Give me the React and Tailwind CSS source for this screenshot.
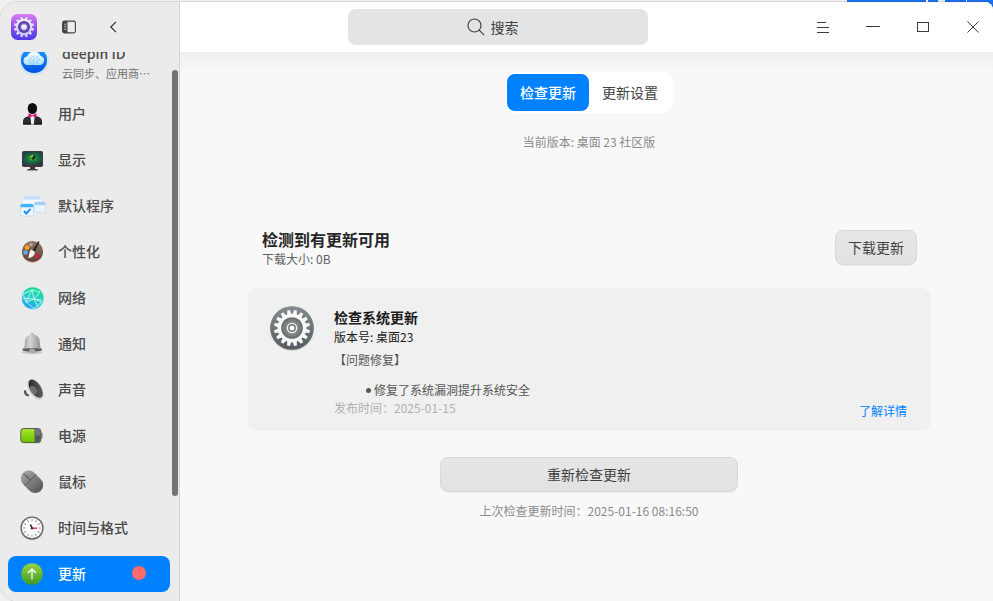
import React from "react";

function teeth(count, cx, cy, w, top, bottom, offset = 0) {
  return Array.from({ length: count }, (_, i) => (
    <path
      key={i}
      d={`M${cx - w / 2} ${cy - bottom}L${cx - w / 3} ${cy - top}H${cx + w / 3}L${cx + w / 2} ${cy - bottom}Z`}
      transform={`rotate(${(360 / count) * i + offset} ${cx} ${cy})`}
    />
  ));
}

function AppLogo() {
  return (
    <svg className="size-[26px] shrink-0" viewBox="0 0 26 26" aria-hidden="true">
      <defs>
        <linearGradient id="logoBg" x1="0" y1="0" x2="0" y2="1">
          <stop offset="0" stopColor="#e07bf5" />
          <stop offset=".5" stopColor="#8a50e6" />
          <stop offset="1" stopColor="#4f3bea" />
        </linearGradient>
        <linearGradient id="logoGear" x1="0" y1="0" x2="0" y2="1">
          <stop offset="0" stopColor="#f6f0fd" />
          <stop offset="1" stopColor="#c3c8f6" />
        </linearGradient>
      </defs>
      <rect width="26" height="26" rx="6.5" fill="url(#logoBg)" />
      <g fill="#dcd8f8">{teeth(12, 13, 13, 3.2, 10.2, 7.2, 15)}</g>
      <circle cx="13" cy="13" r="8" fill="url(#logoGear)" />
      <circle cx="13" cy="13" r="6" fill="#5a3a9e" />
      <circle cx="13" cy="13" r="4.400" fill="#7c62c8" />
      <circle cx="13" cy="13" r="2.800" fill="#eef0ff" />
    </svg>
  );
}

function CloudIcon() {
  return (
    <svg className="h-9 w-[30px] shrink-0" viewBox="0 0 30 36" aria-hidden="true">
      <defs>
        <linearGradient id="cloudBg" x1="0" y1="0" x2="0" y2="1">
          <stop offset="0" stopColor="#1aa0ff" />
          <stop offset="1" stopColor="#0050e0" />
        </linearGradient>
        <linearGradient id="cloudFg" x1="0" y1="0" x2="0" y2="1">
          <stop offset="0" stopColor="#ffffff" />
          <stop offset="1" stopColor="#a9dcff" />
        </linearGradient>
      </defs>
      <circle cx="14" cy="15.5" r="15" fill="#cfe3f2" />
      <circle cx="14" cy="15" r="13" fill="url(#cloudBg)" />
      <path d="M7.500 20a4.300 4.300 0 0 1-.6-8.500 7.400 7.400 0 0 1 13.600-.8A4.800 4.800 0 0 1 20.500 20Z" fill="url(#cloudFg)" />
      <path d="M11 19c-3-3 0-8 4-8M14 19.500c-2-3 0-7 4-7.500M17 19c-1-2 0-4 3-4.500" fill="none" stroke="#7cc4fb" strokeWidth=".8" />
    </svg>
  );
}

function UserIcon() {
  return (
    <>
      <path d="M3 23.500v-3.200c0-3 2-4.300 5.200-5.100L12.500 14l4.300 1.200c3.200.8 5.200 2.100 5.200 5.100v3.200Z" fill="#2c2c2e" />
      <path d="M3 23.500v-1.500h19v1.500Z" fill="#141414" />
      <path d="M10.300 14.500h4.400l-.9 9h-2.600Z" fill="#f0f0f0" />
      <ellipse cx="12.400" cy="7.500" rx="4.700" ry="5.600" fill="#0d0d0d" />
      <path d="M8.500 12.300 12.500 14.200l4-1.900v4.400l-4-1.700-4 1.700Z" fill="#e0146e" />
    </>
  );
}

function DisplayIcon() {
  return (
    <>
      <defs>
        <radialGradient id="screen" cx=".5" cy=".5" r=".65">
          <stop offset="0" stopColor="#56b52c" />
          <stop offset=".45" stopColor="#1d7440" />
          <stop offset="1" stopColor="#12404a" />
        </radialGradient>
      </defs>
      <ellipse cx="12.500" cy="23.600" rx="7" ry="1" fill="#cfcfcf" />
      <path d="M10 19h5v3h2.500v1.200h-10V22H10Z" fill="#3a3a3a" />
      <rect x="2" y="4" width="21" height="16" rx="1.800" fill="#3b3b3b" />
      <rect x="3.500" y="5.500" width="18" height="11.500" fill="url(#screen)" />
      <path d="m15 8-3.500 2.500 2 3.500.5-3 1.500 1Z" fill="#0b2a18" />
      <path d="m13 8-3 1.500 2.500 1Z" fill="#b9e04a" />
    </>
  );
}

function DefaultAppsIcon() {
  return (
    <>
      <rect x="3" y="3" width="18" height="15" rx="2" fill="#f4f9ff" />
      <path d="M3 6.500V5a2 2 0 0 1 2-2h14a2 2 0 0 1 2 2v1.500Z" fill="#c3e0fc" />
      <rect x="14.500" y="9" width="11" height="10.500" rx="1.800" fill="#e9f3fe" stroke="#b9d4ee" strokeWidth=".5" />
      <path d="M14.500 12v-1.200A1.800 1.800 0 0 1 16.300 9h7.400a1.800 1.800 0 0 1 1.800 1.800V12Z" fill="#9dd0fc" />
      <rect x=".5" y="11" width="13" height="12" rx="1.800" fill="#f0f7ff" stroke="#a9cdec" strokeWidth=".5" />
      <path d="M.5 14.300v-1.500A1.800 1.800 0 0 1 2.300 11h9.400a1.800 1.800 0 0 1 1.800 1.800v1.500Z" fill="#3fb0fb" />
      <path d="m4 18 2.300 2.500 4.300-4.700" fill="none" stroke="#1e90f5" strokeWidth="1.900" />
    </>
  );
}

function PaletteIcon() {
  return (
    <>
      <defs>
        <linearGradient id="palette" x1="0" y1="0" x2="0" y2="1">
          <stop offset="0" stopColor="#8d7769" />
          <stop offset="1" stopColor="#5f4338" />
        </linearGradient>
      </defs>
      <circle cx="12.500" cy="13.300" r="10.700" fill="#e8b9ae" />
      <circle cx="12.500" cy="12.500" r="10.500" fill="url(#palette)" />
      <circle cx="7" cy="8.500" r="2.300" fill="#f5a623" />
      <circle cx="11" cy="5.800" r="1.700" fill="#c9a48c" />
      <circle cx="5.500" cy="13.500" r="2.200" fill="#58aef0" />
      <circle cx="17" cy="17" r="2" fill="#e3174f" />
      <path d="M18.500 2 12.500 11.500l2 1.500L19.500 3Z" fill="#2a2523" />
      <path d="M11.500 10.500 15 13c-.4 4-3.500 6-7 6 1.600-2 .6-6.500 3.500-8.500Z" fill="#f6f1ec" />
    </>
  );
}

function NetworkIcon() {
  return (
    <>
      <defs>
        <linearGradient id="globe" x1=".7" y1="0" x2=".3" y2="1">
          <stop offset="0" stopColor="#1edc8c" />
          <stop offset=".5" stopColor="#24cfc8" />
          <stop offset="1" stopColor="#1f9df0" />
        </linearGradient>
      </defs>
      <circle cx="12.700" cy="13.600" r="11.300" fill="#b9e6f2" />
      <circle cx="12.700" cy="13" r="10.800" fill="url(#globe)" />
      <path
        d="m3 9 9-4 8 2M3 9l3 8 8-3 6-7M6 17l6-12 2 9 4 8M2.500 13l20 2M6 17l8 6.500L22 17l-8-3"
        fill="none"
        stroke="#d4fff3"
        strokeWidth=".8"
      />
    </>
  );
}

function BellIcon() {
  return (
    <>
      <defs>
        <linearGradient id="bell" x1="0" y1="0" x2="1" y2="0">
          <stop offset="0" stopColor="#9a9a9a" />
          <stop offset=".4" stopColor="#d6d6d6" />
          <stop offset="1" stopColor="#858585" />
        </linearGradient>
      </defs>
      <ellipse cx="12" cy="21.300" rx="10.300" ry="1.800" fill="#c2c2c2" />
      <circle cx="12.300" cy="3.400" r="1.600" fill="#b5b5b5" />
      <path d="M12.300 3.500c5 0 7.400 3.200 7.500 7.500.1 4 .4 5.500 2.400 7.500-2 2-18 2-20 0 2-2 2.500-3.500 2.600-7.500.1-4.300 2.500-7.500 7.500-7.500Z" fill="url(#bell)" />
      <path d="M2 18.500c3-1.700 17.400-1.700 20.400 0-1 2.800-19.400 2.800-20.400 0Z" fill="#585858" />
      <ellipse cx="12.200" cy="20" rx="3.200" ry="2.200" fill="#a9a9a9" />
    </>
  );
}

function SpeakerIcon() {
  return (
    <>
      <defs>
        <linearGradient id="cone" x1="0" y1="0" x2="1" y2="1">
          <stop offset="0" stopColor="#1f1f1f" />
          <stop offset="1" stopColor="#6a6a6a" />
        </linearGradient>
      </defs>
      <path d="M9 3 4 13c-.8 3.500 1.500 6.500 5 6.500l10 3Z" fill="#f0f0f0" />
      <path d="M4.300 13c-1.300 3 .9 6.300 4.200 6.500l1-1.700c-2-.5-3.300-2.300-3.200-4.300Z" fill="#5a5a5a" />
      <ellipse cx="15.300" cy="12.300" rx="6.500" ry="11.600" fill="#d0d0d0" transform="rotate(-33 15.300 12.300)" />
      <ellipse cx="15.700" cy="11.700" rx="5.300" ry="10.300" fill="url(#cone)" transform="rotate(-33 15.700 11.700)" />
      <ellipse cx="13.500" cy="13" rx="3" ry="4.600" fill="#6f6f6f" transform="rotate(-33 13.500 13)" />
    </>
  );
}

function BatteryIcon() {
  return (
    <>
      <defs>
        <linearGradient id="charge" x1="0" y1="0" x2="0" y2="1">
          <stop offset="0" stopColor="#a4e62a" />
          <stop offset="1" stopColor="#6cc600" />
        </linearGradient>
      </defs>
      <rect x="0" y="6" width="22" height="15" rx="4" fill="#d5e8ae" />
      <rect x="20" y="9.500" width="2.700" height="6" rx="1.200" fill="#8b8b8b" />
      <rect x=".3" y="5" width="21" height="15" rx="4" fill="#5a5a5a" />
      <path d="M4 6h10.500v13H4a2.700 2.700 0 0 1-2.700-2.700V8.700A2.700 2.700 0 0 1 4 6Z" fill="url(#charge)" />
      <path d="M14.500 6H17.500a3 3 0 0 1 3 3v3.500h-6Z" fill="#747474" />
    </>
  );
}

function MouseIcon() {
  return (
    <>
      <defs>
        <linearGradient id="mouse" x1="0" y1="0" x2="0" y2="1">
          <stop offset="0" stopColor="#a2a2a2" />
          <stop offset="1" stopColor="#585858" />
        </linearGradient>
      </defs>
      <g transform="rotate(-45 12 12.800)">
        <rect x="4" y=".3" width="16" height="25" rx="8" fill="url(#mouse)" />
        <path d="M4 10.500h16M12 .3v10.200" stroke="#505050" strokeWidth=".9" />
        <rect x="11" y="4" width="2" height="4.500" rx="1" fill="#6a6a6a" />
      </g>
    </>
  );
}

function ClockIcon() {
  return (
    <>
      <circle cx="12" cy="13.600" r="12" fill="#cfcfcf" />
      <circle cx="12" cy="13" r="11.500" fill="#636363" />
      <circle cx="12" cy="13" r="10.200" fill="#fbfbfb" />
      <g fill="#777777">
        {Array.from({ length: 12 }, (_, i) => (
          <rect key={i} x="11.600" y="4.200" width=".9" height="1.900" transform={`rotate(${i * 30} 12 13)`} />
        ))}
      </g>
      <path d="M10.500 9.500 12 13.200" stroke="#222222" strokeWidth="1.500" />
      <path d="M12 13.300h5" stroke="#ee3b3b" strokeWidth="1.400" />
      <circle cx="12" cy="13.200" r="1.200" fill="#333333" />
    </>
  );
}

function UpdateIcon() {
  return (
    <>
      <defs>
        <linearGradient id="update" x1="0" y1="0" x2="0" y2="1">
          <stop offset="0" stopColor="#98d645" />
          <stop offset="1" stopColor="#3f9a22" />
        </linearGradient>
      </defs>
      <circle cx="12" cy="13" r="10.800" fill="url(#update)" />
      <path d="M12 18.200V8.500M8 12l4-4 4 4" fill="none" stroke="#ffffff" strokeWidth="1.300" />
    </>
  );
}

const items = [
  { name: "用户", Icon: UserIcon },
  { name: "显示", Icon: DisplayIcon },
  { name: "默认程序", Icon: DefaultAppsIcon },
  { name: "个性化", Icon: PaletteIcon },
  { name: "网络", Icon: NetworkIcon },
  { name: "通知", Icon: BellIcon },
  { name: "声音", Icon: SpeakerIcon },
  { name: "电源", Icon: BatteryIcon },
  { name: "鼠标", Icon: MouseIcon },
  { name: "时间与格式", Icon: ClockIcon },
  { name: "更新", Icon: UpdateIcon, active: true, badge: true },
];

function Sidebar() {
  return (
    <aside className="flex w-[180px] shrink-0 flex-col border-r border-[#d4d4d4] bg-[#ebebeb]">
      <header className="flex h-[50px] shrink-0 items-center pl-[11px]">
        <AppLogo />
        <button type="button" aria-label="切换侧边栏" className="ml-5 flex size-6 items-center justify-center">
          <svg className="size-[14px]" viewBox="0 0 14 14" fill="none">
            <rect x=".6" y="1.100" width="12.800" height="11.800" rx="1.800" stroke="#444444" strokeWidth="1.100" />
            <path d="M1 2.500A1.500 1.500 0 0 1 2.500 1H5.500v12h-3A1.500 1.500 0 0 1 1 11.500Z" fill="#444444" />
            <path d="M2.300 4.200h2M2.300 6.700h2M2.300 9.200h2" stroke="#ebebeb" strokeWidth=".9" />
          </svg>
        </button>
        <button type="button" aria-label="返回" className="ml-5 flex size-6 items-center justify-center">
          <svg className="size-3" viewBox="0 0 12 12" fill="none">
            <path d="M9 .8 3.800 6 9 11.200" stroke="#333333" strokeWidth="1.200" />
          </svg>
        </button>
      </header>
      <div className="flex min-h-0 flex-1">
        <nav className="flex min-w-0 flex-1 flex-col justify-end gap-[10px] overflow-hidden pb-[9px] pl-2">
          <a href="#deepin-id" className="flex h-[46px] shrink-0 items-center gap-3 pl-3 text-[#4d4d4d]">
            <CloudIcon />
            <span className="min-w-0 pb-[2px] whitespace-nowrap">
              <span className="block text-sm leading-5 font-medium">deepin ID</span>
              <span className="block pt-px text-[11px] leading-[18px] text-[#707070]">云同步、应用商…</span>
            </span>
          </a>
          {items.map(({ name, Icon, active, badge }) => (
            <a
              key={name}
              href="#"
              className={
                active
                  ? "flex h-9 shrink-0 items-center gap-3 rounded-lg bg-[#0081ff] pl-3 text-sm font-medium text-white"
                  : "flex h-9 shrink-0 items-center gap-3 rounded-lg pl-3 text-sm font-medium text-[#4a4a4a]"
              }
            >
              <svg className="size-[26px] shrink-0" viewBox="0 0 26 26" aria-hidden="true">
                <Icon />
              </svg>
              <span className="flex-1 pb-[2px]">{name}</span>
              {badge && <span className="mr-6 mb-[2px] size-[14px] rounded-full bg-[#ff6a6a]" />}
            </a>
          ))}
        </nav>
        <div className="mt-[18px] mr-px ml-[2px] h-[426px] w-[6px] shrink-0 rounded-full bg-[#737373]" />
      </div>
    </aside>
  );
}

function WindowButton({ label, children }) {
  return (
    <button type="button" aria-label={label} className="flex size-10 items-center justify-center">
      <svg className="size-4" viewBox="0 0 16 16" fill="none" stroke="#3c3c3c">
        {children}
      </svg>
    </button>
  );
}

function TitleBar() {
  return (
    <header className="flex h-[50px] shrink-0 items-center bg-white">
      <div className="flex min-w-0 flex-1 justify-center pl-3">
        <label className="flex h-9 w-[300px] items-center justify-center gap-[6px] rounded-lg bg-[#e4e4e4] pr-[10px]">
          <svg className="size-[18px]" viewBox="0 0 18 18" fill="none" stroke="#444444" strokeWidth="1.200">
            <circle cx="7.500" cy="7.500" r="6.500" />
            <path d="m12.200 12.200 5 5" />
          </svg>
          <input
            type="text"
            aria-label="搜索"
            placeholder="搜索"
            className="w-7 bg-transparent text-sm text-[#414141] outline-none placeholder:text-[#414141] placeholder:opacity-100"
          />
        </label>
      </div>
      <div className="flex gap-[10px]">
        <WindowButton label="菜单">
          <path d="M2 3.500h9M2 8.500h12M2 13.500h12" />
        </WindowButton>
        <WindowButton label="最小化">
          <path d="M1 7.500h14" />
        </WindowButton>
        <WindowButton label="最大化">
          <rect x="2.500" y="3.500" width="11" height="9" />
        </WindowButton>
        <WindowButton label="关闭">
          <path d="m2.500 2.500 11 11M13.500 2.500l-11 11" />
        </WindowButton>
      </div>
    </header>
  );
}

function SystemGear() {
  return (
    <svg className="size-[46px] shrink-0" viewBox="0 0 46 46" aria-hidden="true">
      <defs>
        <linearGradient id="sysBg" x1="0" y1="0" x2="0" y2="1">
          <stop offset="0" stopColor="#868d91" />
          <stop offset="1" stopColor="#555c60" />
        </linearGradient>
      </defs>
      <circle cx="23" cy="23.600" r="22.300" fill="#d6d6d6" />
      <circle cx="23" cy="23" r="21.800" fill="url(#sysBg)" />
      <g fill="#f7f7f7">
        {teeth(16, 23, 23, 4.2, 18, 13.5, 11.25)}
        <circle cx="23" cy="23" r="14.300" />
      </g>
      <circle cx="23" cy="23" r="10.800" fill="#6c7173" />
      <g fill="#858785">{teeth(16, 23, 23, 2.2, 8.8, 6)}</g>
      <circle cx="23" cy="23" r="7.500" fill="#858785" />
      <circle cx="23" cy="23" r="5.300" fill="#f5f5f5" />
      <circle cx="23" cy="23" r="3.900" fill="#6d7072" />
      <circle cx="23" cy="23" r="2.500" fill="#fafafa" />
    </svg>
  );
}

const raised =
  "rounded-lg border border-[#d8d8d8] bg-linear-to-b from-[#e6e6e6] to-[#e2e2e2] pb-[2px] text-sm text-[#414141] shadow-[0_1px_1px_rgba(0,0,0,0.04)]";

function UpdatePage() {
  return (
    <main className="flex flex-1 flex-col bg-[#f8f8f8]">
      <div className="h-5 shrink-0 bg-linear-to-b from-[#eeeeee] to-[#f8f8f8]" />
      <div className="flex flex-col items-center pl-[5px] text-xs">
        <div className="flex rounded-[10px] bg-white p-[2px] text-sm">
          <button type="button" className="h-[37px] w-[82px] rounded-lg bg-[#0081ff] pb-[2px] font-medium text-white">
            检查更新
          </button>
          <button type="button" className="h-[37px] w-[82px] rounded-lg pb-[2px] text-[#414141]">
            更新设置
          </button>
        </div>
        <p className="mt-5 leading-[18px] text-[#8c8c8c]">当前版本: 桌面 23 社区版</p>

        <section className="mt-[79px] w-full max-w-[682px]">
          <div className="flex h-[38px] items-start justify-between pr-[13px] pl-[14px]">
            <div>
              <h1 className="text-base leading-[18px] font-bold text-[#262626]">检测到有更新可用</h1>
              <p className="mt-[2px] leading-[18px] text-[#606060]">下载大小: 0B</p>
            </div>
            <button type="button" className={`${raised} h-[35px] w-[82px]`}>
              下载更新
            </button>
          </div>

          <article className="mt-5 flex gap-[19px] rounded-lg bg-[#f0f0f0] pt-[17px] pr-[23px] pb-[11px] pl-[21px]">
            <SystemGear />
            <div className="flex-1 pb-[3px] text-[#555555]">
              <h2 className="text-sm leading-6 font-bold text-[#1a1a1a]">检查系统更新</h2>
              <p className="leading-4 text-[#1a1a1a]">版本号: 桌面23</p>
              <p className="mt-[6px] leading-[18px]">【问题修复】</p>
              <ul className="mt-3 pl-8">
                <li className="flex items-center gap-[3px] leading-[18px]">
                  <span className="size-[5px] rounded-full bg-[#555555]" />
                  修复了系统漏洞提升系统安全
                </li>
              </ul>
              <p className="leading-[18px] text-[#b0b0b0]">发布时间：2025-01-15</p>
            </div>
            <a href="#details" className="self-end leading-[18px] text-[#0081ff]">
              了解详情
            </a>
          </article>
        </section>

        <button type="button" className={`${raised} mt-[26px] h-[35px] w-[298px]`}>
          重新检查更新
        </button>
        <p className="mt-[10px] leading-[18px] text-[#8c8c8c]">上次检查更新时间：2025-01-16 08:16:50</p>
      </div>
    </main>
  );
}

export default function App() {
  return (
    <div
      lang="zh-CN"
      className="flex h-screen min-h-[560px] flex-col bg-[linear-gradient(to_left,#1a6fee_26px,#dce9fd_26px,#dce9fd_27px,#1a6fee_27px,#1a6fee_48px,#e8eefa_48px,#e8eefa_55px,#1a6fee_55px,#1a6fee_65px,#ffffff_65px,#ffffff_67px,#1a6fee_67px,#1a6fee_146px,#f0f0f0_146px)] pt-[2px] font-['Noto_Sans_CJK_SC',sans-serif]"
    >
      <div className="flex min-h-0 flex-1 overflow-hidden rounded-l-[18px] rounded-tr-lg bg-white shadow-[0_0_0_1px_rgba(0,0,0,0.1)]">
        <Sidebar />
        <div className="flex min-w-0 flex-1 flex-col">
          <TitleBar />
          <UpdatePage />
        </div>
      </div>
    </div>
  );
}
